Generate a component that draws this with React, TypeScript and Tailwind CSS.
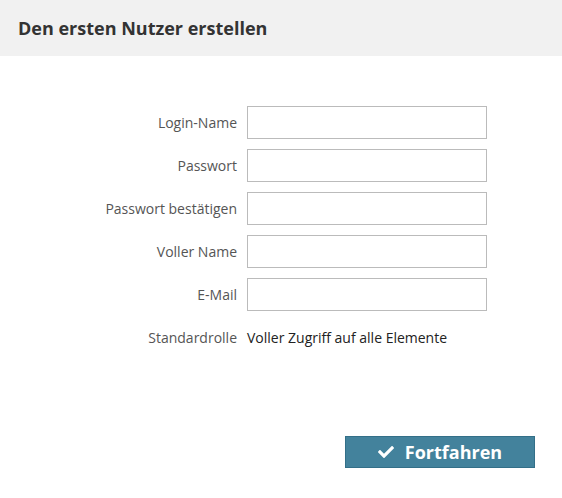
export default function App() {
  const fields = ['Login-Name', 'Passwort', 'Passwort bestätigen', 'Voller Name', 'E-Mail']

  return (
    <div className="w-[562px] h-[498px] bg-white" style={{ fontFamily: '"Open Sans", sans-serif' }}>
      <div className="h-14 bg-[#f1f1f1] flex items-center px-[18px]">
        <h1 className="text-[18px] font-bold text-[#333]">Den ersten Nutzer erstellen</h1>
      </div>

      <div className="pt-[50px] grid grid-cols-[237px_240px] gap-x-[10px] gap-y-[10px]">
        {fields.map(label => (
          <div key={label} className="contents">
            <label className="flex items-center justify-end text-[14px] text-[#555]">{label}</label>
            <input
              type={label.startsWith('Passwort') ? 'password' : 'text'}
              className="h-[33px] border border-[#bbb] bg-white px-2 text-[14px] focus:outline-none"
            />
          </div>
        ))}
        <div className="flex items-center justify-end h-[33px] text-[14px] text-[#555]">Standardrolle</div>
        <div className="flex items-center h-[33px] text-[14px] text-[#222]">Voller Zugriff auf alle Elemente</div>
      </div>

      <div className="pt-[82px] pl-[345px]">
        <button className="w-[190px] h-[32px] bg-[#43829c] border border-[#336f88] text-white flex items-center justify-center gap-[11px]">
          <svg viewBox="0 0 512 512" className="w-[16px] h-[16px]" fill="currentColor">
            <path d="M173.9 439.4l-166.4-166.4c-10-10-10-26.2 0-36.2l36.2-36.2c10-10 26.2-10 36.2 0L192 312.7 432.1 72.6c10-10 26.2-10 36.2 0l36.2 36.2c10 10 10 26.2 0 36.2l-294.4 294.4c-10 10-26.2 10-36.2 0z" />
          </svg>
          <span className="text-[18px] font-bold">Fortfahren</span>
        </button>
      </div>
    </div>
  )
}
